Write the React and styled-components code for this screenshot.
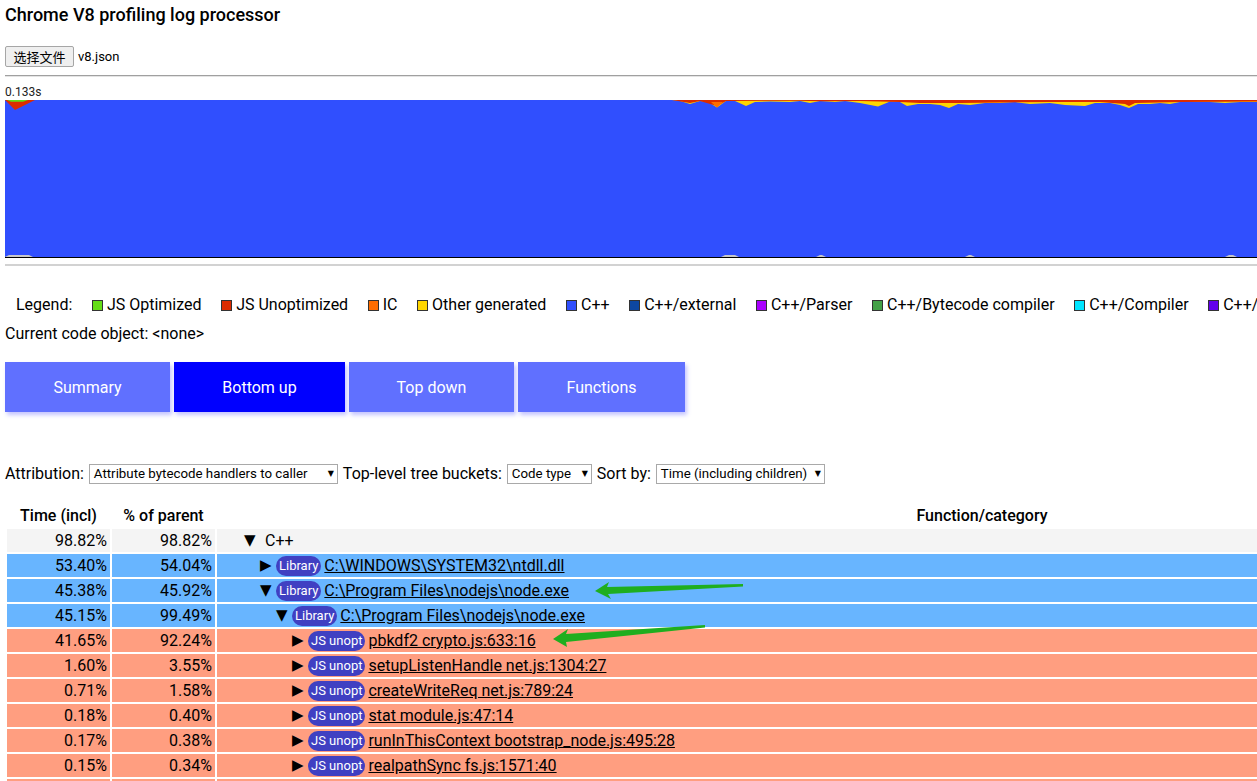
import styled, { createGlobalStyle } from "styled-components";

const GlobalStyle = createGlobalStyle`
  html, body {
    margin: 0;
    padding: 0;
    overflow: hidden;
    background: #fff;
  }
  body {
    font-family: Roboto, "Noto Sans CJK SC", sans-serif;
    color: #000;
  }
`;

const legend = [
  ["JS Optimized", "#64dd17"],
  ["JS Unoptimized", "#dd2c00"],
  ["IC", "#ff6d00"],
  ["Other generated", "#ffd600"],
  ["C++", "#304ffe"],
  ["C++/external", "#0d47a1"],
  ["C++/Parser", "#aa00ff"],
  ["C++/Bytecode compiler", "#43a047"],
  ["C++/Compiler", "#00e5ff"],
  ["C++/Other", "#6200ea"],
  ["Unknown", "#9e9e9e"],
];

const tabs = [
  ["Summary", 165],
  ["Bottom up", 171],
  ["Top down", 165],
  ["Functions", 167],
];

// level, open, kind, time, parent, name
const rows = [
  [0, true, null, "98.82%", "98.82%", "C++"],
  [1, false, "Library", "53.40%", "54.04%", "C:\\WINDOWS\\SYSTEM32\\ntdll.dll"],
  [1, true, "Library", "45.38%", "45.92%", "C:\\Program Files\\nodejs\\node.exe"],
  [2, true, "Library", "45.15%", "99.49%", "C:\\Program Files\\nodejs\\node.exe"],
  [3, false, "JS unopt", "41.65%", "92.24%", "pbkdf2 crypto.js:633:16"],
  [3, false, "JS unopt", "1.60%", "3.55%", "setupListenHandle net.js:1304:27"],
  [3, false, "JS unopt", "0.71%", "1.58%", "createWriteReq net.js:789:24"],
  [3, false, "JS unopt", "0.18%", "0.40%", "stat module.js:47:14"],
  [3, false, "JS unopt", "0.17%", "0.38%", "runInThisContext bootstrap_node.js:495:28"],
  [3, false, "JS unopt", "0.15%", "0.34%", "realpathSync fs.js:1571:40"],
  [3, false, "JS unopt", "0.13%", "0.29%", "tryReadSync fs.js:586:21"],
];

const rowColors = { null: "#f4f4f4", Library: "#68b5ff", "JS unopt": "#ff9e80" };

// timeline top edge (page x, depth in px)
const yellowEdge = [
  [672, 0], [680, 1], [690, 4], [700, 1], [708, 2], [717, 7.5], [726, 1], [735, 1],
  [746, 6], [755, 2], [770, 1.5], [790, 2], [800, 1], [810, 3], [820, 1], [835, 2],
  [845, 1], [860, 3], [878, 6.5], [890, 1.5], [900, 2], [907, 6], [918, 4], [930, 4],
  [940, 5], [949, 8], [958, 4], [970, 5], [985, 3], [1000, 3], [1015, 2], [1030, 4],
  [1050, 3], [1065, 5], [1085, 6], [1095, 3], [1110, 3], [1120, 5], [1129, 8],
  [1138, 4], [1150, 4], [1160, 3], [1170, 4], [1185, 1], [1195, 2], [1210, 2],
  [1225, 3], [1240, 2], [1257, 2], [1300, 3], [1745, 2],
];
const redEdge = [
  [672, 0], [690, 3], [700, 1], [717, 6], [726, 1], [760, 0.8], [800, 0.8], [820, 1.2],
  [860, 1], [900, 2], [920, 3], [960, 3], [1000, 2.5], [1050, 2], [1100, 2], [1125, 4],
  [1129, 6], [1135, 3], [1180, 2], [1257, 1.5], [1745, 1],
];
const band = (pts) =>
  `${pts[0][0] - 5},0 ` +
  pts.map(([x, d]) => `${x - 5},${d}`).join(" ") +
  ` ${pts[pts.length - 1][0] - 5},0`;

const bumps = [[0, 28], [716, 734], [811, 821], [960, 970], [1220, 1232]];

function Timeline() {
  return (
    <svg width="1740" height="157" viewBox="0 0 1740 157">
      <polygon points={band(yellowEdge)} fill="#ffd600" />
      <polygon points={band(redEdge)} fill="#dd2c00" />
      <polygon points="706,2 712,7.5 718,2" fill="#ff6d00" />
      <polygon points="0,0 30,0 10,10" fill="#dd2c00" />
      <polygon points="2,0 23,0 18,1.7 6,1.7" fill="#64dd17" />
      {bumps.map(([a, b]) => (
        <polygon key={a} points={`${a},157 ${a + 4},155 ${b - 4},155 ${b},157`} fill="#c8c8c8" />
      ))}
    </svg>
  );
}

export default function App() {
  return (
    <Page>
      <GlobalStyle />
      <Title>Chrome V8 profiling log processor</Title>
      <FileRow>
        <FileButton>选择文件</FileButton>
        <FileName>v8.json</FileName>
      </FileRow>
      <Rule />
      <TimeLabel>0.133s</TimeLabel>
      <Chart>
        <Timeline />
      </Chart>
      <LightRule />
      <Legend>
        <span>Legend:</span>
        {legend.map(([label, color]) => (
          <LegendItem key={label}>
            <Swatch $color={color} />
            {label}
          </LegendItem>
        ))}
      </Legend>
      <CodeObject>Current code object: &lt;none&gt;</CodeObject>
      <Tabs>
        {tabs.map(([label, w]) => (
          <Tab key={label} $width={w} $active={label === "Bottom up"}>
            {label}
          </Tab>
        ))}
      </Tabs>
      <Controls>
        Attribution:
        <Select $width={249}>
          <span>Attribute bytecode handlers to caller</span>
          <Caret>▼</Caret>
        </Select>
        Top-level tree buckets:
        <Select $width={85}>
          <span>Code type</span>
          <Caret>▼</Caret>
        </Select>
        Sort by:
        <Select $width={169}>
          <span>Time (including children)</span>
          <Caret>▼</Caret>
        </Select>
      </Controls>
      <Table>
        <thead>
          <tr>
            <Th $w={103}>Time (incl)</Th>
            <Th $w={103}>% of parent</Th>
            <Th>Function/category</Th>
          </tr>
        </thead>
        <tbody>
          {rows.map(([level, open, kind, time, parent, name], i) => (
            <Row key={i} $bg={rowColors[kind]}>
              <NumCell>{time}</NumCell>
              <NumCell>{parent}</NumCell>
              <NameCell>
                <NameLine $level={level}>
                  <Toggle $plain={!kind}>{open ? "▼" : "▶"}</Toggle>
                  {kind ? (
                    <>
                      <Chip>{kind}</Chip>
                      <FnLink href="#">{name}</FnLink>
                    </>
                  ) : (
                    <span>{name}</span>
                  )}
                </NameLine>
              </NameCell>
            </Row>
          ))}
        </tbody>
      </Table>
      <Annotations width="1257" height="781" viewBox="0 0 1257 781">
        <polygon points="595,591 609,582 607,587 743,584 743,586.5 608,594 611,599" fill="#1fae1f" />
        <polygon points="553,639 568,629 566,634 705,625 705,627.5 566,642 567,647" fill="#1fae1f" />
      </Annotations>
    </Page>
  );
}

const Page = styled.div`
  position: relative;
  width: 1740px;
  padding: 0 5px 20px;
`;
const Title = styled.h1`
  margin: 0;
  padding-top: 4px;
  font-size: 18px;
  line-height: 22px;
  font-weight: 500;
`;
const FileRow = styled.div`
  display: flex;
  align-items: center;
  gap: 4px;
  margin-top: 20px;
  height: 21px;
`;
const FileButton = styled.button`
  height: 21px;
  width: 69px;
  padding: 0;
  font-family: "Noto Sans CJK SC", sans-serif;
  font-size: 13px;
  color: #000;
  background: #efefef;
  border: 1px solid #a6a6a6;
  border-radius: 2px;
`;
const FileName = styled.span`
  font-size: 13px;
`;
const Rule = styled.div`
  margin-top: 8px;
  border-top: 1px solid #a0a0a0;
  border-bottom: 1px solid #e4e4e4;
`;
const TimeLabel = styled.div`
  margin-top: 8px;
  font-size: 12px;
  line-height: 15px;
  color: #222;
`;
const Chart = styled.div`
  height: 157px;
  background: #304ffe;
  border-bottom: 1px solid #000;
  overflow: hidden;
  svg {
    display: block;
  }
`;
const LightRule = styled.div`
  margin-top: 6px;
  border-top: 2px solid #d2d2d2;
`;
const Legend = styled.div`
  display: flex;
  align-items: center;
  gap: 19.6px;
  margin-top: 29px;
  padding-left: 11px;
  font-size: 16px;
  line-height: 20px;
  white-space: nowrap;
`;
const LegendItem = styled.span`
  display: inline-flex;
  align-items: center;
  gap: 4px;
`;
const Swatch = styled.span`
  width: 9px;
  height: 9px;
  background: ${(p) => p.$color};
  border: 1px solid #333;
`;
const CodeObject = styled.div`
  margin-top: 9px;
  font-size: 16px;
  line-height: 20px;
`;
const Tabs = styled.div`
  display: flex;
  gap: 4px;
  margin-top: 18px;
`;
const Tab = styled.button`
  width: ${(p) => p.$width}px;
  height: 50px;
  padding: 0;
  border: none;
  font-family: Roboto, sans-serif;
  font-size: 16px;
  color: #fff;
  background: ${(p) => (p.$active ? "#0000ff" : "#6070ff")};
  box-shadow: 2px 3px 4px rgba(90, 90, 255, 0.35);
`;
const Controls = styled.div`
  display: flex;
  align-items: center;
  gap: 5px;
  margin-top: 52px;
  font-size: 16px;
  line-height: 20px;
  white-space: nowrap;
`;
const Select = styled.div`
  display: inline-flex;
  align-items: center;
  justify-content: space-between;
  box-sizing: border-box;
  width: ${(p) => p.$width}px;
  height: 20px;
  padding: 0 3px 0 4px;
  font-size: 13.3px;
  background: #fff;
  border: 1px solid #a9a9a9;
`;
const Caret = styled.span`
  font-family: "DejaVu Sans", sans-serif;
  font-size: 8px;
`;
const Table = styled.table`
  width: 1744px;
  margin-top: 18px;
  border-collapse: separate;
  border-spacing: 2px;
  font-size: 16px;
`;
const Th = styled.th`
  width: ${(p) => (p.$w ? `${p.$w}px` : "auto")};
  height: 23px;
  padding: 0;
  font-weight: 500;
  text-align: center;
`;
const Row = styled.tr`
  background: ${(p) => p.$bg};
`;
const NumCell = styled.td`
  height: 23px;
  padding: 0 3px 0 0;
  text-align: right;
  line-height: 23px;
`;
const NameCell = styled.td`
  height: 23px;
  padding: 0;
`;
const NameLine = styled.div`
  display: flex;
  align-items: center;
  height: 23px;
  padding-left: ${(p) => 27 + p.$level * 16}px;
  white-space: nowrap;
`;
const Toggle = styled.span`
  display: inline-block;
  width: 12px;
  margin-right: ${(p) => (p.$plain ? 9 : 4)}px;
  font-family: "DejaVu Sans", sans-serif;
  font-size: 15px;
  line-height: 23px;
`;
const Chip = styled.span`
  height: 20px;
  line-height: 20px;
  padding: 0 3px;
  margin-right: 3px;
  border-radius: 10px;
  background: #4040c2;
  color: #fff;
  font-size: 13px;
`;
const FnLink = styled.a`
  color: #000;
  text-decoration: underline;
`;
const Annotations = styled.svg`
  position: absolute;
  left: 0;
  top: 0;
  pointer-events: none;
`;
